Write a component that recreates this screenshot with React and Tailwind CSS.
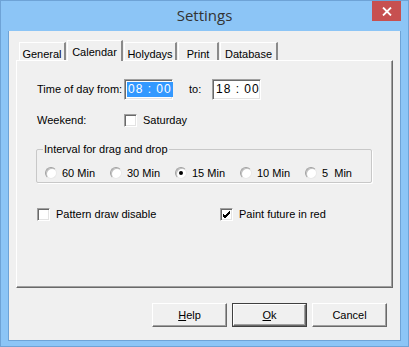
import React from "react";

const sunken = "border border-t-[#a0a0a0] border-l-[#a0a0a0] border-b-white border-r-white shadow-[inset_1px_1px_0_#696969,inset_-1px_-1px_0_#e3e3e3]";

function Check({ checked }) {
  return (
    <div className={`w-[13px] h-[13px] shrink-0 bg-white ${sunken} flex items-center justify-center`}>
      {checked && (
        <svg width="9" height="9" viewBox="0 0 9 9">
          <path d="M1 4 L3 6 L8 1 M1 5 L3 7 L8 2 M1 6 L3 8 L8 3" stroke="#000" strokeWidth="1" fill="none" shapeRendering="crispEdges" />
        </svg>
      )}
    </div>
  );
}

function Radio({ checked }) {
  return (
    <div className="w-[12px] h-[12px] shrink-0 rounded-full bg-white border border-t-[#a0a0a0] border-l-[#a0a0a0] border-b-[#e8e8e8] border-r-[#e8e8e8] shadow-[inset_1px_1px_0_#c0c0c0] flex items-center justify-center">
      {checked && <div className="w-[4px] h-[4px] rounded-full bg-black" />}
    </div>
  );
}

function Tab({ label, active, w }) {
  if (active) {
    return (
      <div className={`${w} h-[21px] -mb-[1px] relative z-10 bg-[#f0f0f0] border-l border-t border-white border-r-2 border-r-[#8a8a8a] flex items-start justify-center pt-[3px] text-[11px] text-black whitespace-nowrap`}>
        {label}
      </div>
    );
  }
  return (
    <div className={`${w} h-[18px] mt-[2px] bg-[#f0f0f0] border-l border-t border-white border-r-2 border-r-[#8a8a8a] flex items-start justify-center pt-[3px] text-[11px] text-black whitespace-nowrap`}>
      {label}
    </div>
  );
}

function Btn({ children, def }) {
  return (
    <div className={`w-[75px] h-[24px] flex ${def ? "border border-[#404040]" : ""}`}>
      <div className="flex-1 bg-[#f0f0f0] border border-t-white border-l-white border-b-[#696969] border-r-[#696969] shadow-[inset_-1px_-1px_0_#a0a0a0] flex items-center justify-center text-[11px] text-black">
        {children}
      </div>
    </div>
  );
}

export default function App() {
  return (
    <div className="w-[409px] h-[347px] bg-[#8cc5f6] border border-[#6ea3d6] flex flex-col relative font-['Liberation_Sans',sans-serif] text-black overflow-hidden whitespace-nowrap">
      <div className="h-[30px] flex items-center justify-center text-[15px] text-[#333] font-['Open_Sans',sans-serif] pb-[1px]">
        Settings
      </div>
      <div className="absolute top-0 right-[7px] w-[29px] h-[20px] bg-[#c75050] flex items-center justify-center">
        <svg width="10" height="9" viewBox="0 0 10 9">
          <path d="M1 0.5 L9 8.5 M9 0.5 L1 8.5" stroke="#fff" strokeWidth="1.8" />
        </svg>
      </div>
      <div className="mx-[7px] mb-[5px] flex-1 bg-[#f0f0f0] border border-[#6ea3d6] border-t-0 flex flex-col px-[7px] pt-[9px]">
        <div className="flex items-end pl-[3px] gap-[1px]">
          <Tab label="General" w="w-[47px]" />
          <Tab label="Calendar" w="w-[56px]" active />
          <Tab label="Holydays" w="w-[53px]" />
          <Tab label="Print" w="w-[41px]" />
          <Tab label="Database" w="w-[58px]" />
        </div>
        <div className="w-[377px] h-[228px] border border-t-white border-l-white border-b-[#696969] border-r-[#696969] shadow-[inset_-1px_-1px_0_#a0a0a0] flex flex-col pl-[20px] pt-[18px] text-[11px]">
          <div className="flex items-center h-[21px]">
            <span className="w-[87px]">Time of day from:</span>
            <div className={`w-[49px] h-[21px] bg-white ${sunken} flex items-center pl-[2px]`}>
              <span className="bg-[#3399ff] text-white text-[12px] tracking-[1px] leading-[15px] px-[1px] whitespace-pre">08 : 00</span>
            </div>
            <span className="ml-[16px] w-[23px]">to:</span>
            <div className={`w-[49px] h-[21px] bg-white ${sunken} flex items-center pl-[3px]`}>
              <span className="text-[12px] tracking-[1px] leading-[15px] whitespace-pre">18 : 00</span>
            </div>
          </div>
          <div className="flex items-center mt-[13px] h-[15px]">
            <span className="w-[87px]">Weekend:</span>
            <Check />
            <span className="ml-[6px]">Saturday</span>
          </div>
          <div className="relative mt-[21px] ml-[-1px] w-[336px] h-[34px] border border-[#c8c8c8] rounded-[2px] shadow-[1px_1px_0_#fff]">
            <span className="absolute -top-[8px] left-[6px] bg-[#f0f0f0] px-[1px] leading-[14px]">Interval for drag and drop</span>
            <div className="flex items-center mt-[15px] pl-[8px]">
              <div className="flex items-center w-[65px]"><Radio /><span className="ml-[5px]">60 Min</span></div>
              <div className="flex items-center w-[65px]"><Radio /><span className="ml-[5px]">30 Min</span></div>
              <div className="flex items-center w-[65px]"><Radio checked /><span className="ml-[5px]">15 Min</span></div>
              <div className="flex items-center w-[65px]"><Radio /><span className="ml-[5px]">10 Min</span></div>
              <div className="flex items-center w-[65px]"><Radio /><span className="ml-[5px] whitespace-pre">5  Min</span></div>
            </div>
          </div>
          <div className="flex items-center mt-[23px]">
            <div className="flex items-center w-[183px]"><Check /><span className="ml-[6px]">Pattern draw disable</span></div>
            <div className="flex items-center"><Check checked /><span className="ml-[6px]">Paint future in red</span></div>
          </div>
        </div>
        <div className="flex justify-end gap-[5px] mt-[15px] pr-[6px]">
          <Btn><span><span className="underline">H</span>elp</span></Btn>
          <Btn def><span><span className="underline">O</span>k</span></Btn>
          <Btn>Cancel</Btn>
        </div>
      </div>
    </div>
  );
}
